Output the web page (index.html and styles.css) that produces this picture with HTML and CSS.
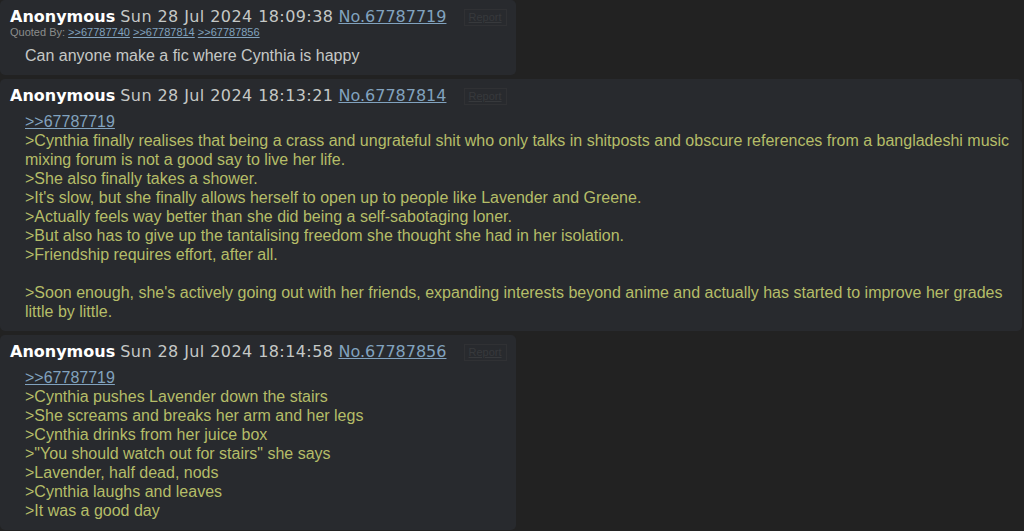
FILE: index.html
```html
<!DOCTYPE html>
<html lang="en">
<head>
    <meta charset="UTF-8">
    <meta name="viewport" content="width=device-width, initial-scale=1.0">
    <title>Thread</title>
    <link rel="stylesheet" href="styles.css">
</head>
<body>
    <!-- Post 1 -->
    <div class="post">
        <div class="post-info">
            <span class="name">Anonymous</span>
            <span class="date">Sun 28 Jul 2024 18:09:38</span>
            <a class="post-no" href="#p67787719">No.67787719</a>
            <a class="report" href="#">Report</a>
        </div>
        <div class="backlinks">
            Quoted By:
            <a href="#p67787740">&gt;&gt;67787740</a>
            <a href="#p67787814">&gt;&gt;67787814</a>
            <a href="#p67787856">&gt;&gt;67787856</a>
        </div>
        <blockquote class="message">Can anyone make a fic where Cynthia is happy</blockquote>
    </div>

    <!-- Post 2 -->
    <div class="post">
        <div class="post-info">
            <span class="name">Anonymous</span>
            <span class="date">Sun 28 Jul 2024 18:13:21</span>
            <a class="post-no" href="#p67787814">No.67787814</a>
            <a class="report" href="#">Report</a>
        </div>
        <blockquote class="message">
            <a class="quotelink" href="#p67787719">&gt;&gt;67787719</a><br>
            <span class="quote">&gt;Cynthia finally realises that being a crass and ungrateful shit who only talks in shitposts and obscure references from a bangladeshi music mixing forum is not a good say to live her life.</span><br>
            <span class="quote">&gt;She also finally takes a shower.</span><br>
            <span class="quote">&gt;It's slow, but she finally allows herself to open up to people like Lavender and Greene.</span><br>
            <span class="quote">&gt;Actually feels way better than she did being a self-sabotaging loner.</span><br>
            <span class="quote">&gt;But also has to give up the tantalising freedom she thought she had in her isolation.</span><br>
            <span class="quote">&gt;Friendship requires effort, after all.</span><br>
            <br>
            <span class="quote">&gt;Soon enough, she's actively going out with her friends, expanding interests beyond anime and actually has started to improve her grades little by little.</span>
        </blockquote>
    </div>

    <!-- Post 3 -->
    <div class="post">
        <div class="post-info">
            <span class="name">Anonymous</span>
            <span class="date">Sun 28 Jul 2024 18:14:58</span>
            <a class="post-no" href="#p67787856">No.67787856</a>
            <a class="report" href="#">Report</a>
        </div>
        <blockquote class="message">
            <a class="quotelink" href="#p67787719">&gt;&gt;67787719</a><br>
            <span class="quote">&gt;Cynthia pushes Lavender down the stairs</span><br>
            <span class="quote">&gt;She screams and breaks her arm and her legs</span><br>
            <span class="quote">&gt;Cynthia drinks from her juice box</span><br>
            <span class="quote">&gt;"You should watch out for stairs" she says</span><br>
            <span class="quote">&gt;Lavender, half dead, nods</span><br>
            <span class="quote">&gt;Cynthia laughs and leaves</span><br>
            <span class="quote">&gt;It was a good day</span>
        </blockquote>
    </div>
</body>
</html>
```

FILE: styles.css
```css
/* General */
body {
    margin: 0;
    padding: 0;
    background: #222222;
    font-family: 'Liberation Sans', Arial, sans-serif;
    color: #c5c8c6;
    overflow: hidden;
}
a {
    color: #81a2be;
}

/* Posts */
.post {
    display: table;
    max-width: 1022px;
    box-sizing: border-box;
    background: #282a2e;
    border-radius: 5px;
    padding: 7px 9px 10px 10px;
    margin-bottom: 4px;
}
.post-info {
    font-family: 'DejaVu Sans', Verdana, sans-serif;
    font-size: 16px;
    line-height: 19px;
    white-space: nowrap;
}
.name {
    color: #ffffff;
    font-weight: bold;
}
.date {
    color: #c5c8c6;
    letter-spacing: 0.42px;
}
.report {
    display: inline-block;
    vertical-align: 1px;
    margin-left: 12px;
    padding: 0 4px;
    border: 1px solid #303134;
    font-family: 'Liberation Sans', Arial, sans-serif;
    font-size: 11px;
    line-height: 15px;
    color: #37393c;
}

/* Quoted by */
.backlinks {
    font-size: 11px;
    line-height: 13px;
    color: #8b8d8c;
}

/* Message body */
.message {
    margin: 7px 0 0 15px;
    font-size: 16px;
    line-height: 19px;
}
.quote {
    color: #b5bd68;
}
```
